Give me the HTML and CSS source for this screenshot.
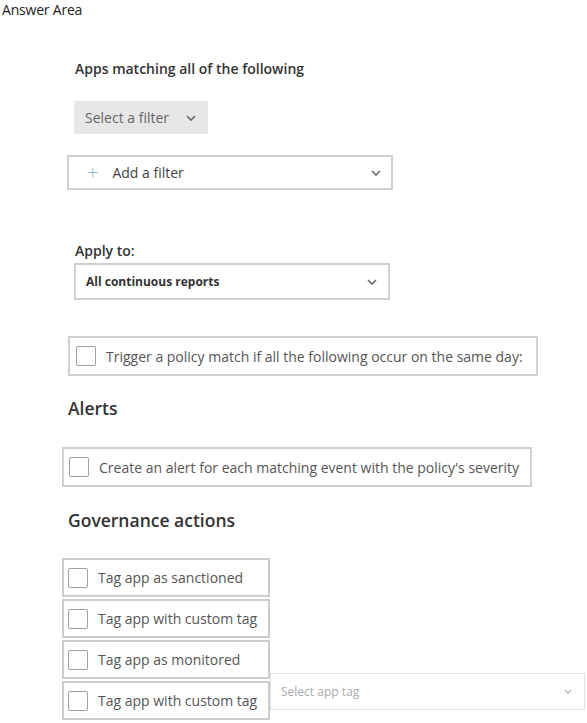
FILE: index.html
```html
<!DOCTYPE html>
<html lang="en">
<head>
    <meta charset="UTF-8">
    <meta name="viewport" content="width=device-width, initial-scale=1.0">
    <title>Answer Area</title>
    <link rel="stylesheet" href="styles.css">
</head>
<body>
    <div class="page">
        <div class="answer-title">Answer Area</div>

        <div class="label apps-label">Apps matching all of the following</div>

        <div class="filter-select">
            <span>Select a filter</span>
            <svg class="chevron" width="10" height="6" viewBox="0 0 10 6"><path d="M1 1l4 4 4-4" fill="none" stroke="currentColor" stroke-width="1.6"/></svg>
        </div>

        <div class="add-filter">
            <span class="plus">+</span>
            <span class="add-text">Add a filter</span>
            <svg class="chevron" width="10" height="6" viewBox="0 0 10 6"><path d="M1 1l4 4 4-4" fill="none" stroke="currentColor" stroke-width="1.6"/></svg>
        </div>

        <div class="label apply-label">Apply to:</div>

        <div class="dropdown">
            <span>All continuous reports</span>
            <svg class="chevron" width="10" height="6" viewBox="0 0 10 6"><path d="M1 1l4 4 4-4" fill="none" stroke="currentColor" stroke-width="1.6"/></svg>
        </div>

        <div class="check-row trigger">
            <span class="box"></span>
            <span>Trigger a policy match if all the following occur on the same day:</span>
        </div>

        <h2 class="alerts-title">Alerts</h2>

        <div class="check-row alert">
            <span class="box"></span>
            <span>Create an alert for each matching event with the policy's severity</span>
        </div>

        <h2 class="gov-title">Governance actions</h2>

        <div class="tags">
            <div class="tag-row"><span class="box"></span><span>Tag app as sanctioned</span></div>
            <div class="tag-row"><span class="box"></span><span>Tag app with custom tag</span></div>
            <div class="tag-row"><span class="box"></span><span>Tag app as monitored</span></div>
            <div class="tag-line">
                <div class="tag-row"><span class="box"></span><span>Tag app with custom tag</span></div>
                <div class="app-tag">
                    <span>Select app tag</span>
                    <svg class="chevron" width="8" height="5" viewBox="0 0 10 6"><path d="M1 1l4 4 4-4" fill="none" stroke="currentColor" stroke-width="1.4"/></svg>
                </div>
            </div>
        </div>
    </div>
</body>
</html>
```

FILE: styles.css
```css
body {
    margin: 0;
    padding: 0;
    background: #fff;
    font-family: "Open Sans", Arial, sans-serif;
    color: #333;
}
.page {
    width: 587px;
    height: 723px;
    overflow: hidden;
}
.answer-title {
    font-size: 14px;
    line-height: 19px;
    padding-left: 2px;
    color: #222;
    letter-spacing: -0.2px;
}
.label {
    font-size: 14px;
    font-weight: 600;
    line-height: 18px;
    color: #333;
    margin-left: 75px;
}
.apps-label {
    margin-top: 41px;
}
.chevron {
    color: #666;
}
.filter-select {
    margin: 23px 0 0 74px;
    width: 134px;
    height: 33px;
    box-sizing: border-box;
    background: #e6e6e6;
    display: flex;
    align-items: center;
    justify-content: space-between;
    padding: 0 12px 0 11px;
    font-size: 14px;
    color: #666;
}
.add-filter {
    margin: 21px 0 0 67px;
    width: 326px;
    height: 35px;
    box-sizing: border-box;
    border: 2px solid #cfcfcf;
    display: flex;
    align-items: center;
    padding: 0 10px 0 18px;
    font-size: 14px;
    color: #444;
}
.plus {
    color: #8db3d3;
    font-size: 20px;
    font-weight: 300;
    margin-right: 14px;
}
.add-text {
    flex: 1;
}
.apply-label {
    margin-top: 52px;
}
.dropdown {
    margin: 3px 0 0 74px;
    width: 316px;
    height: 37px;
    box-sizing: border-box;
    border: 2px solid #cfcfcf;
    display: flex;
    align-items: center;
    justify-content: space-between;
    padding: 0 11px 0 10px;
    font-size: 12px;
    font-weight: 700;
    color: #333;
}
.check-row {
    height: 40px;
    width: 470px;
    box-sizing: border-box;
    border: 2px solid #cfcfcf;
    display: flex;
    align-items: center;
    font-size: 14px;
    color: #555;
}
.trigger {
    margin: 36px 0 0 68px;
    padding-left: 6px;
}
.alert {
    margin: 28px 0 0 62px;
    padding-left: 5px;
}
.box {
    width: 20px;
    height: 20px;
    box-sizing: border-box;
    border: 1.5px solid #a0a0a0;
    border-radius: 2px;
    margin-right: 10px;
    flex: none;
}
h2 {
    margin: 0;
    font-size: 17.5px;
    font-weight: 600;
    line-height: 22px;
    color: #333;
    margin-left: 68px;
}
.alerts-title {
    margin-top: 21px;
}
.gov-title {
    margin-top: 22px;
}
.tags {
    margin: 27px 0 0 62px;
    display: flex;
    flex-direction: column;
    gap: 2px;
}
.tag-row {
    width: 208px;
    height: 39px;
    box-sizing: border-box;
    border: 2px solid #c9cec9;
    display: flex;
    align-items: center;
    padding-left: 4px;
    font-size: 14px;
    color: #555;
    flex: none;
}
.tag-line {
    display: flex;
    align-items: flex-start;
}
.app-tag {
    margin-top: -8px;
    width: 315px;
    height: 37px;
    box-sizing: border-box;
    border: 1px solid #e2e2e2;
    display: flex;
    align-items: center;
    justify-content: space-between;
    padding: 0 12px 0 10px;
    font-size: 12px;
    color: #aaa;
}
.app-tag .chevron {
    color: #aaa;
}
```
